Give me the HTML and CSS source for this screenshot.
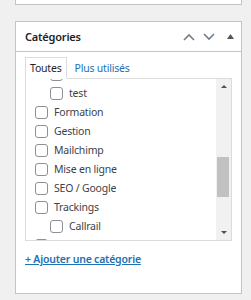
FILE: index.html
```html
<!DOCTYPE html>
<html lang="fr">
  <head>
    <meta charset="UTF-8" />
    <title>Catégories</title>
    <link rel="stylesheet" href="styles.css">
  </head>
  <body>
    <div class="postbox postbox-prev"></div>

    <div class="postbox">
      <!-- Header with move / toggle buttons -->
      <div class="postbox-header">
        <h2>Catégories</h2>
        <div class="handle-actions">
          <span class="handle up">
            <svg width="12" height="8" viewBox="0 0 12 8"><path d="M1 7 L6 2 L11 7" fill="none" stroke="currentColor" stroke-width="1.6"/></svg>
          </span>
          <span class="handle down">
            <svg width="12" height="8" viewBox="0 0 12 8"><path d="M1 1 L6 6 L11 1" fill="none" stroke="currentColor" stroke-width="1.6"/></svg>
          </span>
          <span class="handle toggle">
            <svg width="7" height="5" viewBox="0 0 7 5"><path d="M0 5 L3.5 0 L7 5 Z" fill="currentColor"/></svg>
          </span>
        </div>
      </div>

      <div class="inside">
        <ul class="category-tabs">
          <li class="tab active">Toutes</li>
          <li class="tab"><a href="#">Plus utilisés</a></li>
        </ul>

        <div class="tabs-panel">
          <div class="checklist-view" id="checklist-view">
            <ul class="categorychecklist">
              <li><label><input type="checkbox"> Actualités</label></li>
              <li><label><input type="checkbox"> Agence</label></li>
              <li><label><input type="checkbox"> Analytics</label></li>
              <li><label><input type="checkbox"> Blog</label></li>
              <li><label><input type="checkbox"> Conseils</label></li>
              <li><label><input type="checkbox"> Design</label></li>
              <li><label><input type="checkbox"> Développement</label></li>
              <li><label><input type="checkbox"> Divi</label></li>
              <li><label><input type="checkbox"> E-commerce</label></li>
              <li><label><input type="checkbox"> Elementor</label></li>
              <li><label><input type="checkbox"> Emailing</label></li>
              <li><label><input type="checkbox"> Entreprise</label></li>
              <li><label><input type="checkbox"> Évènements</label></li>
              <li>
                <label><input type="checkbox"> Exemples</label>
                <ul class="children">
                  <li><label><input type="checkbox"> Démo</label></li>
                  <li><label><input type="checkbox"> test</label></li>
                </ul>
              </li>
              <li><label><input type="checkbox"> Formation</label></li>
              <li><label><input type="checkbox"> Gestion</label></li>
              <li><label><input type="checkbox"> Mailchimp</label></li>
              <li><label><input type="checkbox"> Mise en ligne</label></li>
              <li><label><input type="checkbox"> SEO / Google</label></li>
              <li>
                <label><input type="checkbox"> Trackings</label>
                <ul class="children">
                  <li><label><input type="checkbox"> Callrail</label></li>
                </ul>
              </li>
              <li><label><input type="checkbox"> Tutoriels</label></li>
              <li><label><input type="checkbox"> Vidéo</label></li>
              <li><label><input type="checkbox"> Web</label></li>
              <li><label><input type="checkbox"> WooCommerce</label></li>
              <li><label><input type="checkbox"> WordPress</label></li>
              <li><label><input type="checkbox"> Zapier</label></li>
            </ul>
          </div>

          <!-- classic scrollbar -->
          <div class="scrollbar">
            <div class="scroll-btn"><span class="arrow-up"></span></div>
            <div class="scroll-track"><div class="scroll-thumb"></div></div>
            <div class="scroll-btn"><span class="arrow-down"></span></div>
          </div>
        </div>

        <p class="category-add"><a href="#">+ Ajouter une catégorie</a></p>
      </div>
    </div>

    <script src="script.js"></script>
  </body>
</html>
```

FILE: styles.css
```css
* {
  margin: 0;
  padding: 0;
  box-sizing: border-box;
}

body {
  background-color: #f0f0f1;
  font-family: "Noto Sans", "Open Sans", sans-serif;
  font-size: 10.5px;
  letter-spacing: -0.2px;
  color: #3c434a;
  padding: 0 10px 0 15px;
}

a {
  color: #2271b1;
  text-decoration: none;
}

.postbox {
  width: 227px;
  background-color: #fff;
  border: 1px solid #c3c4c7;
  margin-top: 16px;
}

.postbox-prev {
  height: 5px;
  margin-top: 0;
  border-top: none;
}

.postbox-header {
  height: 30px;
  display: flex;
  align-items: center;
  justify-content: space-between;
  border-bottom: 1px solid #c3c4c7;
  padding: 0 7px 1px 9px;
}

.postbox-header h2 {
  font-size: 11px;
  font-weight: 600;
  color: #1d2327;
}

.handle-actions {
  display: flex;
  align-items: center;
  gap: 8px;
  padding-top: 1px;
}

.handle {
  display: flex;
  color: #787c82;
}

.handle.down {
  color: #6c7d93;
}

.handle.toggle {
  color: #50575e;
  margin-left: 4px;
}

.inside {
  padding: 5px 9px 27px 9px;
}

.category-tabs {
  list-style: none;
  display: flex;
  gap: 3px;
  height: 22px;
  margin-bottom: -1px;
}

.tab {
  padding: 0 4px;
  line-height: 20px;
  border: 1px solid transparent;
}

.tab.active {
  border-color: #dcdcde;
  border-bottom-color: #fff;
  background-color: #fff;
  color: #1d2327;
  position: relative;
}

.tabs-panel {
  height: 163px;
  display: flex;
  border: 1px solid #dcdcde;
}

.checklist-view {
  flex: 1;
  overflow: hidden;
}

.categorychecklist {
  list-style: none;
  padding: 6px 9px;
}

.categorychecklist li {
  line-height: 19px;
}

.categorychecklist label {
  display: flex;
  align-items: center;
  gap: 6px;
  height: 19px;
  color: #3c434a;
}

.children {
  list-style: none;
  margin-left: 15px;
}

input[type="checkbox"] {
  appearance: none;
  width: 13px;
  height: 13px;
  border: 1px solid #8c8f94;
  border-radius: 3px;
  background-color: #fff;
  flex-shrink: 0;
}

.scrollbar {
  width: 15px;
  display: flex;
  flex-direction: column;
  background-color: #f1f1f1;
}

.scroll-btn {
  height: 15px;
  display: flex;
  align-items: center;
  justify-content: center;
}

.arrow-up,
.arrow-down {
  width: 0;
  height: 0;
  border-left: 3.5px solid transparent;
  border-right: 3.5px solid transparent;
}

.arrow-up {
  border-bottom: 3.5px solid #505050;
}

.arrow-down {
  border-top: 3.5px solid #505050;
}

.scroll-track {
  flex: 1;
}

.scroll-thumb {
  height: 40px;
  margin: 63px 2px 0 1px;
  background-color: #c1c1c1;
}

.category-add {
  margin-top: 11px;
  font-weight: 600;
}

.category-add a {
  text-decoration: underline;
}
```

FILE: script.js
```js
document.getElementById("checklist-view").scrollTop = 286;
```
